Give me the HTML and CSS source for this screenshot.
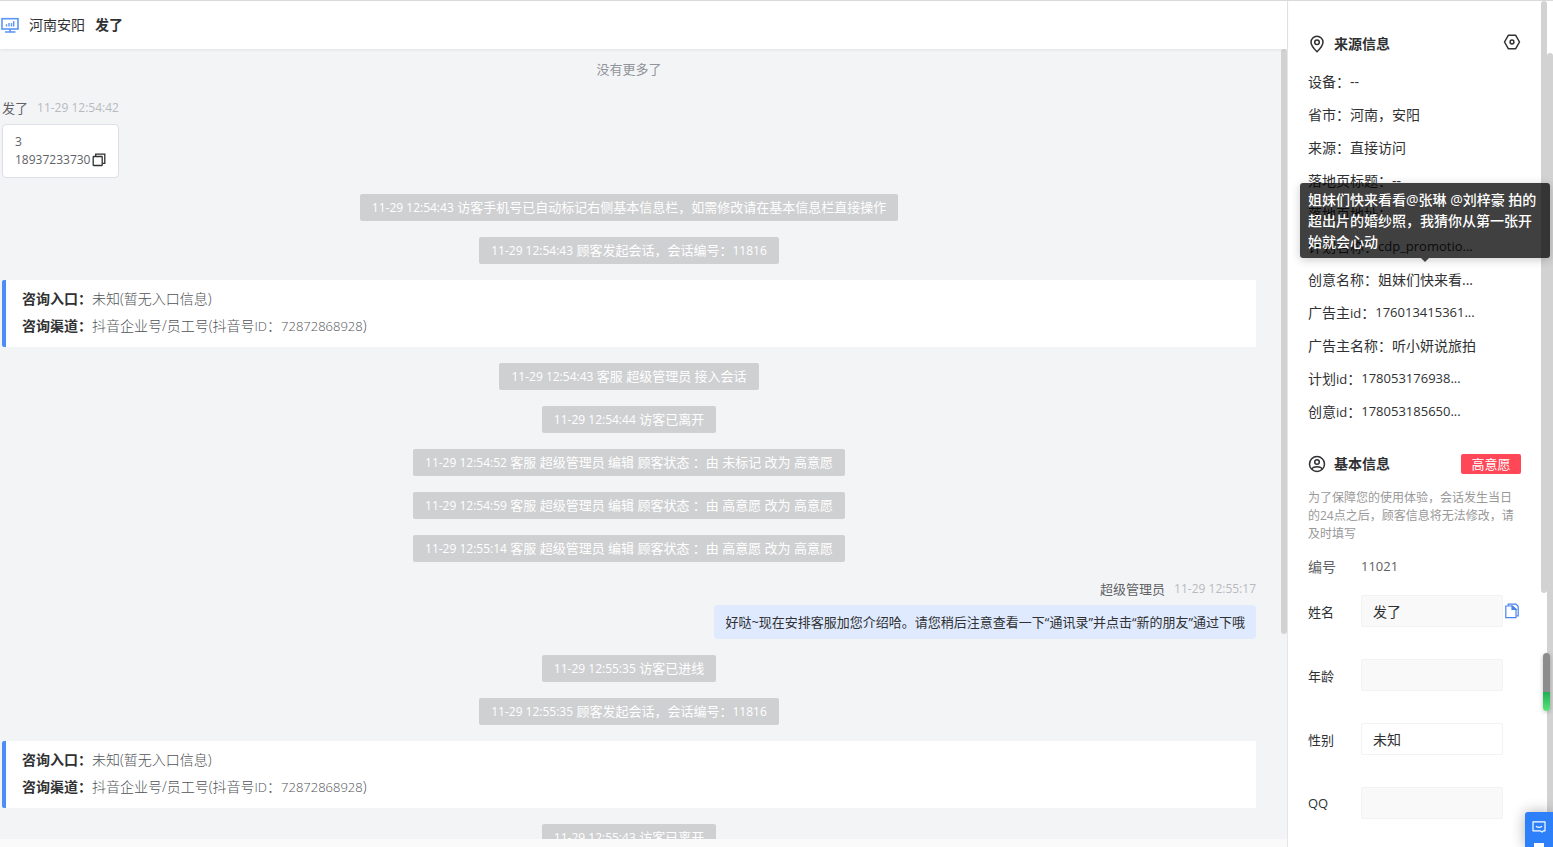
FILE: index.html
```html
<!DOCTYPE html>
<html lang="zh-CN">
<head>
<meta charset="utf-8">
<title>会话详情</title>
<link rel="stylesheet" href="styles.css">
</head>
<body>
<div class="app">
  <main class="chat">
    <header class="chat-header">
      <svg class="icon-source" viewBox="0 0 18 16" fill="none" stroke="#5a94f5">
        <rect x="1" y="1.700" width="16" height="10.300" stroke-width="1.600"/>
        <path d="M5.500 9.500V7.200M8 9.500V6M10.500 9.500V6M12.700 9.500V4" stroke-width="1.400"/>
        <path d="M9 12V15M4 15H14.500" stroke-width="1.600"/>
      </svg>
      <span>河南安阳</span>
      <strong>发了</strong>
    </header>
    <div class="chat-body">
      <div class="messages">
        <p class="no-more">没有更多了</p>
        <article class="message">
          <p class="sender"><span>发了</span><time>11-29 12:54:42</time></p>
          <div class="bubble">
            <div>3</div>
            <div class="phone"><span>18937233730</span><button class="copy" type="button" aria-label="复制">
              <svg viewBox="0 0 14 14" width="14" height="14" fill="none" stroke="#303133" stroke-width="1.3"><rect x="1.2" y="3.5" width="9" height="9" rx=".6"/><path d="M3.7 3.3V1.2H12.8V10.3H10.5"/></svg>
            </button></div>
          </div>
        </article>
        <p class="notice"><time>11-29 12:54:43</time> 访客手机号已自动标记右侧基本信息栏，如需修改请在基本信息栏直接操作</p>
        <p class="notice"><time>11-29 12:54:43</time> 顾客发起会话，会话编号：<span class="num">11816</span></p>
        <section class="entry">
          <p><strong>咨询入口：</strong>未知(暂无入口信息)</p>
          <p><strong>咨询渠道：</strong>抖音企业号/员工号(抖音号<span class="num">ID</span>：<span class="num">72872868928</span>)</p>
        </section>
        <p class="notice"><time>11-29 12:54:43</time> 客服 超级管理员 接入会话</p>
        <p class="notice"><time>11-29 12:54:44</time> 访客已离开</p>
        <p class="notice"><time>11-29 12:54:52</time> 客服 超级管理员 编辑 顾客状态 ：由 未标记 改为 高意愿</p>
        <p class="notice"><time>11-29 12:54:59</time> 客服 超级管理员 编辑 顾客状态 ：由 高意愿 改为 高意愿</p>
        <p class="notice"><time>11-29 12:55:14</time> 客服 超级管理员 编辑 顾客状态 ：由 高意愿 改为 高意愿</p>
        <article class="message own">
          <p class="sender"><span>超级管理员</span><time>11-29 12:55:17</time></p>
          <div class="bubble">好哒~现在安排客服加您介绍哈。请您稍后注意查看一下“通讯录”并点击“新的朋友”通过下哦</div>
        </article>
        <p class="notice"><time>11-29 12:55:35</time> 访客已进线</p>
        <p class="notice"><time>11-29 12:55:35</time> 顾客发起会话，会话编号：<span class="num">11816</span></p>
        <section class="entry">
          <p><strong>咨询入口：</strong>未知(暂无入口信息)</p>
          <p><strong>咨询渠道：</strong>抖音企业号/员工号(抖音号<span class="num">ID</span>：<span class="num">72872868928</span>)</p>
        </section>
        <p class="notice"><time>11-29 12:55:43</time> 访客已离开</p>
      </div>
      <div class="rail rail-chat"><i></i></div>
    </div>
    <footer class="chat-footer"></footer>
  </main>

  <aside class="side">
    <div class="side-content">
      <div class="section-title">
        <svg viewBox="0 0 18 18" width="18" height="18" fill="none" stroke="#303133" stroke-width="1.5"><path d="M9 16.7C5.2 13 3 10.3 3 7.2A6 6 0 0 1 15 7.2C15 10.3 12.800 13 9 16.700Z"/><circle cx="9" cy="7.200" r="2.300"/></svg>
        <h2>来源信息</h2>
        <button class="setting" type="button" aria-label="设置">
          <svg viewBox="0 0 18 18" width="18" height="18" fill="none" stroke="#303133" stroke-width="1.500"><path d="M5.300 2.300H12.700L16.500 9L12.700 15.700H5.300L1.500 9Z" stroke-linejoin="round"/><circle cx="9" cy="9" r="1.900"/></svg>
        </button>
      </div>
      <dl class="info">
        <div><dt>设备：</dt><dd>--</dd></div>
        <div><dt>省市：</dt><dd>河南，安阳</dd></div>
        <div><dt>来源：</dt><dd>直接访问</dd></div>
        <div><dt>落地页标题：</dt><dd>--</dd></div>
        <div><dt>落地页地址：</dt><dd></dd></div>
        <div><dt>计划名称：</dt><dd class="num">cdp_promotio...</dd></div>
        <div class="has-tip"><dt>创意名称：</dt><dd>姐妹们快来看...</dd>
          <div class="tooltip" role="tooltip">姐妹们快来看看@张琳 @刘梓豪 拍的超出片的婚纱照，我猜你从第一张开始就会心动</div>
        </div>
        <div><dt>广告主<span class="num">id</span>：</dt><dd class="num">176013415361...</dd></div>
        <div><dt>广告主名称：</dt><dd>听小妍说旅拍</dd></div>
        <div><dt>计划<span class="num">id</span>：</dt><dd class="num">178053176938...</dd></div>
        <div><dt>创意<span class="num">id</span>：</dt><dd class="num">178053185650...</dd></div>
      </dl>
      <div class="section-title">
        <svg viewBox="0 0 18 18" width="18" height="18" fill="none" stroke="#303133" stroke-width="1.500"><circle cx="9" cy="9" r="7.500"/><circle cx="9" cy="7" r="2.300"/><path d="M3.800 14.200C4.500 12.300 6 11.800 9 11.800S13.500 12.300 14.200 14.200"/></svg>
        <h2>基本信息</h2>
        <span class="tag">高意愿</span>
      </div>
      <p class="hint">为了保障您的使用体验，会话发生当日的24点之后，顾客信息将无法修改，请及时填写</p>
      <div class="serial"><span>编号</span><span class="num">11021</span></div>
      <form class="form">
        <div class="field"><label for="name">姓名</label><input id="name" type="text" value="发了">
          <button class="copy" type="button" aria-label="复制姓名">
            <svg viewBox="0 0 14 16" width="14" height="16" fill="none" stroke="#4a83f0" stroke-width="1.200"><path d="M3.200 2.700V1.200H11L13.200 3.200V12.800H11.500"/><path d="M.8 3H7.500L11 6.200V14.600H.8Z"/><path d="M7 3.200V6.500H11Z" fill="#4a83f0"/></svg>
          </button></div>
        <div class="field"><label for="age">年龄</label><input id="age" type="text"></div>
        <div class="field"><label for="gender">性别</label><select id="gender"><option>未知</option></select></div>
        <div class="field"><label for="qq">QQ</label><input id="qq" type="text"></div>
      </form>
    </div>
    <div class="rail rail-side"><i></i></div>
    <div class="rail rail-page"><i></i></div>
  </aside>
  <div class="meter"></div>
  <button class="service" type="button" aria-label="在线客服">
    <svg viewBox="0 0 16 14" width="16" height="14" fill="none" stroke="#fff" stroke-width="1.400"><path d="M1 1H15V11.500H13L11.500 13L9.500 11.500H1Z" stroke-linejoin="round"/><path d="M4.500 6C6 7.800 10 7.800 11.500 6"/></svg>
    <i></i>
  </button>
</div>
</body>
</html>
```
FILE: styles.css
```css
* { box-sizing: border-box; }
body, p, h2, dl, dd { margin: 0; }
body {
  font-family: "Open Sans", "Noto Sans CJK SC", sans-serif;
  font-size: 14px;
  color: #303133;
}
button {
  border: 0;
  padding: 0;
  background: none;
  display: flex;
}
.num, time { font-size: 13px; }

.app {
  position: relative;
  display: flex;
  height: 100vh;
  overflow: hidden;
  border-top: 1px solid #d9d9d9;
  background: #fff;
}

/* Conversation */
.chat {
  flex: 1;
  min-width: 0;
  display: flex;
  flex-direction: column;
  border-right: 1px solid #e6e6e6;
}
.chat-header {
  flex: none;
  height: 48px;
  display: flex;
  align-items: center;
  gap: 10px;
  padding-left: 1px;
  box-shadow: 0 1px 3px rgba(0, 0, 0, .08);
  z-index: 1;
}
.chat-header span, .chat-header strong { padding-bottom: 2px; }
.icon-source { width: 18px; height: 16px; }
.chat-body {
  flex: 1;
  min-height: 0;
  display: flex;
  overflow: hidden;
  background: #f3f4f6;
}
.messages {
  flex: 1;
  display: flex;
  flex-direction: column;
  align-items: center;
  gap: 16px;
  padding: 10px 25px 0 2px;
  font-size: 13px;
}
.messages > * { flex: none; }
.messages .num, time { font-size: 12px; }
.no-more { padding-bottom: 2px; line-height: 20px; color: #909399; }
.message {
  align-self: stretch;
  display: flex;
  flex-direction: column;
  align-items: flex-start;
  gap: 5px;
}
.message.own { align-items: flex-end; }
.sender {
  display: flex;
  gap: 9px;
  line-height: 22px;
  color: #606266;
}
.sender time { color: #b8babf; }
.bubble {
  padding: 8px 12px;
  border: 1px solid #dcdfe6;
  border-radius: 4px;
  background: #fff;
  line-height: 18px;
  font-size: 12px;
  color: #606266;
  white-space: nowrap;
}
.phone { display: flex; align-items: center; gap: 2px; }
.own .bubble {
  padding: 8px 11px;
  border: 0;
  background: #dfeafe;
  font-size: 13px;
  color: #303133;
}
.notice {
  padding: 0 12px;
  border-radius: 2px;
  background: #cfd0d2;
  line-height: 27px;
  color: #fff;
  white-space: nowrap;
}
.entry {
  align-self: stretch;
  padding: 5px 16px 7px;
  border-left: 4px solid #4e8df7;
  border-radius: 2px 0 0 2px;
  background: #fff;
  font-size: 14px;
  line-height: 27px;
  font-weight: 300;
  color: #505256;
}
.entry strong { font-weight: 700; color: #303133; }
.messages .entry .num { font-size: 13px; }
.chat-footer { flex: none; height: 8px; background: #fafafa; }

/* Scroll rails */
.rail { flex: none; width: 6px; height: 100%; }
.rail i { display: block; border-radius: 3px; background: #d2d2d2; }
.rail-chat i { height: 74%; }
.rail-side i { height: 70%; }
.rail-page { padding-top: 52px; }
.rail-page i { height: 100%; }

/* Visitor details */
.side { flex: none; width: 265px; display: flex; }
.side-content { flex: 1; min-width: 0; padding: 32px 20px 0; }
.section-title { display: flex; align-items: center; gap: 8px; height: 22px; }
.section-title h2 { font-size: 14px; line-height: 22px; }
.setting, .tag { margin-left: auto; }
.setting { align-self: flex-start; }
.info { padding: 10px 0 25px; }
.info > div { display: flex; height: 33px; line-height: 33px; white-space: nowrap; }
.has-tip { position: relative; }
.tooltip {
  position: absolute;
  left: -8px;
  bottom: 38px;
  width: 250px;
  padding: 6px 8px;
  border-radius: 3px;
  background: rgba(0, 0, 0, .75);
  box-shadow: 0 2px 10px rgba(0, 0, 0, .2);
  color: #fff;
  font-weight: 500;
  line-height: 21px;
  white-space: normal;
}
.tooltip::after {
  content: "";
  position: absolute;
  top: 100%;
  left: 50%;
  margin-left: -4px;
  border: 4px solid transparent;
  border-top-color: #404040;
  border-bottom: 0;
}
.tag {
  width: 60px;
  border-radius: 2px;
  background: #ff4757;
  color: #fff;
  font-size: 13px;
  line-height: 20px;
  text-align: center;
}
.hint { padding-top: 14px; font-size: 12px; line-height: 18px; color: #999; }
.serial { display: flex; align-items: center; height: 22px; margin-top: 12px; color: #606266; }
.serial span:first-child { width: 53px; }
.form { display: grid; gap: 32px; padding-top: 18px; }
.field { display: flex; align-items: center; }
.field label { width: 53px; font-size: 13px; }
.field input, .field select {
  width: 142px;
  height: 32px;
  padding: 0 11px;
  border: 1px solid #f2f2f2;
  border-radius: 2px;
  background: #f9f9f9;
  appearance: none;
  font: inherit;
  color: #303133;
}
.field select { background: #fff; }
.field .copy { margin-left: 2px; }

/* Floating widgets */
.meter {
  position: absolute;
  right: 3px;
  top: 652px;
  width: 7px;
  height: 58px;
  border-radius: 4px;
  background: linear-gradient(#8c8c8c 67%, #1fae54 67%, #5be37a);
  box-shadow: 0 1px 4px rgba(0, 0, 0, .25);
}
.service {
  position: absolute;
  right: 0;
  bottom: 0;
  width: 28px;
  height: 35px;
  flex-direction: column;
  align-items: center;
  gap: 10px;
  padding-top: 9px;
  overflow: hidden;
  border-radius: 3px 0 0 0;
  background: #2e80fa;
  box-shadow: 0 0 14px rgba(0, 0, 0, .3);
}
.service i { flex: none; width: 10px; height: 4px; background: #fff; }
```
